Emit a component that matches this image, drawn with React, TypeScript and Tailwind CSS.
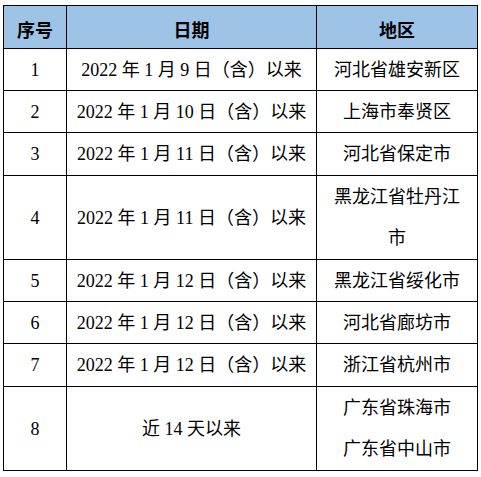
const rows: { no: string; date: string; area: string[]; h: number }[] = [
  { no: "1", date: "2022 年 1 月 9 日（含）以来", area: ["河北省雄安新区"], h: 42 },
  { no: "2", date: "2022 年 1 月 10 日（含）以来", area: ["上海市奉贤区"], h: 42 },
  { no: "3", date: "2022 年 1 月 11 日（含）以来", area: ["河北省保定市"], h: 43 },
  { no: "4", date: "2022 年 1 月 11 日（含）以来", area: ["黑龙江省牡丹江", "市"], h: 84 },
  { no: "5", date: "2022 年 1 月 12 日（含）以来", area: ["黑龙江省绥化市"], h: 42 },
  { no: "6", date: "2022 年 1 月 12 日（含）以来", area: ["河北省廊坊市"], h: 42 },
  { no: "7", date: "2022 年 1 月 12 日（含）以来", area: ["浙江省杭州市"], h: 43 },
  { no: "8", date: "近 14 天以来", area: ["广东省珠海市", "广东省中山市"], h: 84 },
];

function Cell({ h, children }: { h: number; children: React.ReactNode }) {
  return (
    <td className="border border-black p-0">
      <div
        className="flex flex-col items-center justify-center overflow-hidden leading-none"
        style={{ height: h - 1 }}
      >
        {children}
      </div>
    </td>
  );
}

export default function App() {
  return (
    <div className="bg-white w-[481px] h-[477px] pt-[5px] pl-[3px]">
      <table
        className="border-collapse table-fixed w-[474px] text-[18px] text-black"
        style={{ fontFamily: '"Liberation Serif", "Noto Sans CJK SC", serif' }}
      >
        <colgroup>
          <col className="w-[63px]" />
          <col className="w-[250px]" />
          <col className="w-[161px]" />
        </colgroup>
        <thead>
          <tr className="bg-[#9dc3e6]">
            {["序号", "日期", "地区"].map((t) => (
              <th key={t} className="border border-black p-0">
                <div className="h-[42px] flex items-center justify-center pt-[4px] font-bold text-[18px] leading-none font-['Noto_Sans_CJK_SC',sans-serif]">
                  {t}
                </div>
              </th>
            ))}
          </tr>
        </thead>
        <tbody>
          {rows.map((r) => (
            <tr key={r.no}>
              <Cell h={r.h}>{r.no}</Cell>
              <Cell h={r.h}>{r.date}</Cell>
              <Cell h={r.h}>
                {r.area.map((a) => (
                  <div key={a} className="h-[41px] flex items-center justify-center">
                    {a}
                  </div>
                ))}
              </Cell>
            </tr>
          ))}
        </tbody>
      </table>
    </div>
  );
}
